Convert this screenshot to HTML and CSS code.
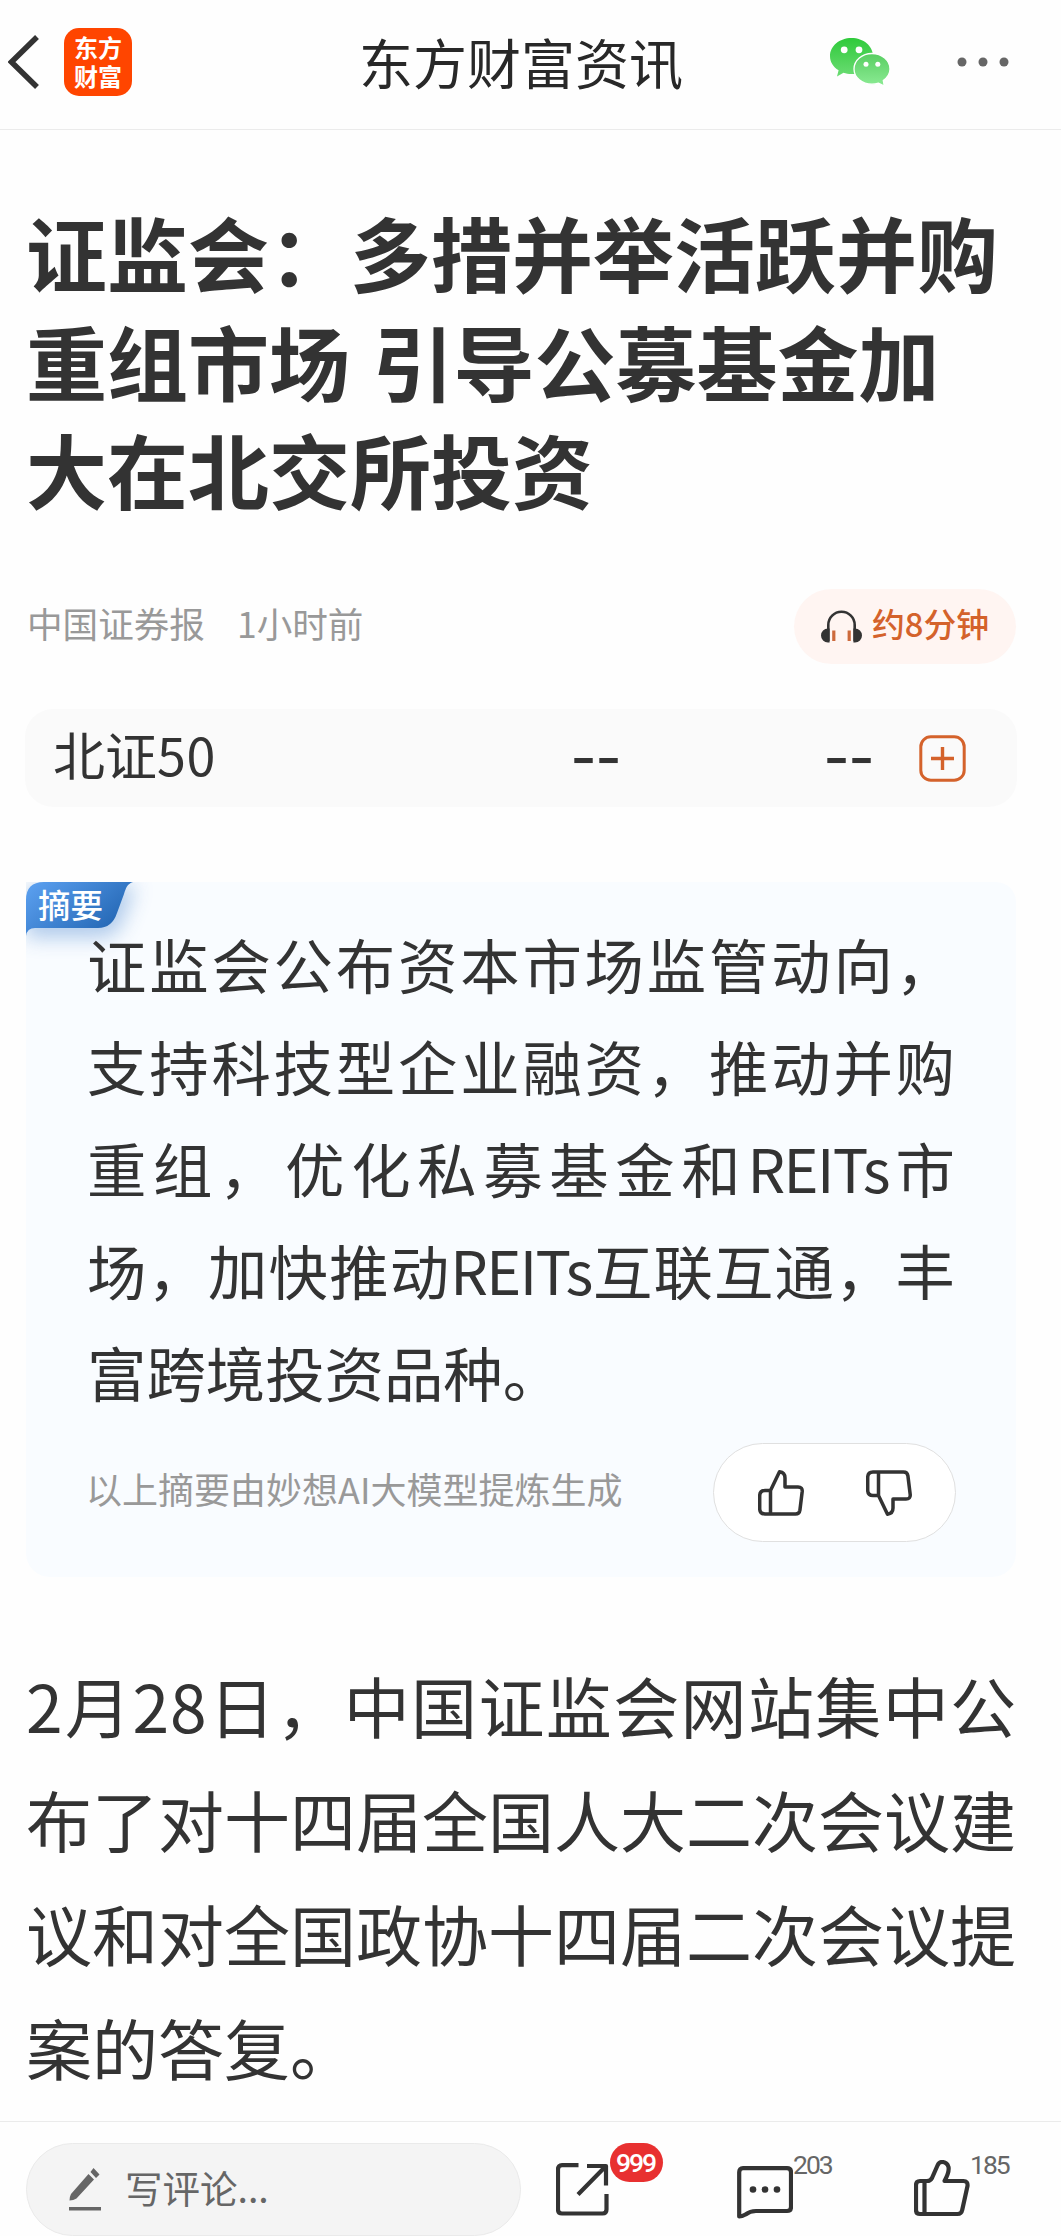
FILE: index.html
```html
<!DOCTYPE html>
<html lang="zh-CN">
<head>
    <meta charset="UTF-8">
    <meta name="viewport" content="width=device-width, initial-scale=1.0">
    <title>东方财富资讯</title>
    <link rel="stylesheet" href="styles.css">
</head>
<body>
    <!-- 顶部导航 -->
    <header class="header">
        <div class="header-left">
            <svg class="back" width="32" height="56" viewBox="0 0 32 56">
                <path d="M29 3L3.500 28L29 53" fill="none" stroke="#333" stroke-width="5.500"/>
            </svg>
            <div class="logo">东方<br>财富</div>
        </div>
        <div class="header-title">东方财富资讯</div>
        <div class="header-right">
            <svg width="60" height="49" viewBox="0 0 60 49">
                <defs>
                    <linearGradient id="green" x1="0" y1="0" x2="0" y2="1">
                        <stop offset="0" stop-color="#2fca3b"/>
                        <stop offset="1" stop-color="#6bdc73"/>
                    </linearGradient>
                    <linearGradient id="lightGreen" x1="0" y1="0" x2="0" y2="1">
                        <stop offset="0" stop-color="#58ce62"/>
                        <stop offset="1" stop-color="#8ceb94"/>
                    </linearGradient>
                </defs>
                <path d="M21.500 0C33.500 0 43 8 43 18S33.500 36 21.500 36C18.500 36 16 35.500 13.500 34.700L7 38.500L8.600 32.300C3 29 0 23.800 0 18C0 8 9.500 0 21.500 0Z" fill="url(#green)"/>
                <path d="M41.900 15.500C52 15.500 60 22.500 60 31C60 35.500 57.500 39.500 53.300 42.500L54.300 48.200L48.500 45.200C46.500 45.800 44.500 46.200 41.900 46.200C32 46.200 24 39.500 24 31S32 15.500 41.900 15.500Z" fill="url(#lightGreen)" stroke="#fff" stroke-width="1.300"/>
                <g fill="#fff">
                    <circle cx="14.200" cy="11.800" r="3.400"/><circle cx="29" cy="11.800" r="3.400"/>
                    <circle cx="36" cy="26.200" r="2.500"/><circle cx="47.800" cy="26.200" r="2.500"/>
                </g>
            </svg>
            <svg width="52" height="10" viewBox="0 0 52 10" fill="#666">
                <circle cx="5" cy="5" r="4.500"/><circle cx="26" cy="5" r="4.500"/><circle cx="47" cy="5" r="4.500"/>
            </svg>
        </div>
    </header>

    <main class="article">
        <h1>证监会：多措并举活跃并购<br>重组市场 引导公募基金加<br>大在北交所投资</h1>

        <div class="meta">
            <span class="source">中国证券报</span>
            <span class="time">1小时前</span>
            <div class="listen">
                <svg width="41" height="33" viewBox="0 0 41 33">
                    <path d="M7.300 31V15A13.200 13.200 0 0 1 33.700 15V31" fill="none" stroke="#333" stroke-width="2.600"/>
                    <path d="M8.600 18.500V32.500H7A7 7 0 0 1 7 18.500ZM32.400 18.500V32.500H34A7 7 0 0 0 34 18.500Z" fill="#333"/>
                    <path d="M12.800 20.500V31M28.200 20.500V31" stroke="#cd6a3c" stroke-width="3.200"/>
                </svg>
                <span>约8分钟</span>
            </div>
        </div>

        <!-- 相关指数 -->
        <div class="stock">
            <span class="stock-name">北证<b>50</b></span>
            <span class="dash">--</span>
            <span class="dash">--</span>
            <svg width="47" height="47" viewBox="0 0 47 47" fill="none" stroke="#d4622b">
                <rect x="1.800" y="1.800" width="43.400" height="43.400" rx="10" stroke-width="3"/>
                <path d="M12 23.500H35M23.500 12V35" stroke-width="3.400"/>
            </svg>
        </div>

        <!-- AI 摘要 -->
        <section class="summary">
            <div class="tag">
                <svg width="170" height="100" viewBox="0 0 170 100">
                    <defs>
                        <linearGradient id="blue" x1="0" y1="0" x2="1" y2="0.600">
                            <stop offset="0" stop-color="#5da2f2"/>
                            <stop offset="1" stop-color="#2366b3"/>
                        </linearGradient>
                        <filter id="shade" x="-50%" y="-50%" width="200%" height="250%">
                            <feGaussianBlur stdDeviation="10"/>
                        </filter>
                    </defs>
                    <path d="M0 4H110L96 40Q92 54 76 56H0Z" fill="#3a7ccb" opacity="0.380" filter="url(#shade)"/>
                    <path d="M0 18Q0 0 18 0H107C101 2 100 6 98 12L91 31Q86 46 72 46H9Q1 46 0 54Z" fill="url(#blue)"/>
                </svg>
                <span>摘要</span>
            </div>
            <p>
                <span class="line">证监会公布资本市场监管动向，</span>
                <span class="line">支持科技型企业融资，推动并购</span>
                <span class="line">重组，优化私募基金和<b>REITs</b>市</span>
                <span class="line">场，加快推动<b>REITs</b>互联互通，丰</span>
                <span class="line last">富跨境投资品种。</span>
            </p>
            <div class="summary-footer">
                <span>以上摘要由妙想AI大模型提炼生成</span>
                <div class="vote">
                    <svg width="46" height="46" viewBox="0 0 46 46">
                        <path d="M12.500 20.500H7Q1.700 20.500 1.700 26V38.500Q1.700 44 7 44H37.500Q41.300 44 41.900 40.200L44.200 21.500Q44.600 17 40 17H27V8Q27 2.500 21.500 1.800L12.500 20.500V44"/>
                    </svg>
                    <svg width="46" height="46" viewBox="0 0 46 46">
                        <path d="M12.500 25.500H7Q1.700 25.500 1.700 20V7.500Q1.700 2 7 2H37.500Q41.300 2 41.900 5.800L44.200 24.500Q44.600 29 40 29H27V38Q27 43.500 21.500 44.200L12.500 25.500V2"/>
                    </svg>
                </div>
            </div>
        </section>

        <div class="content">
            <span class="line"><i>2</i>月<i>28</i>日，中国证监会网站集中公</span>
            <span class="line">布了对十四届全国人大二次会议建</span>
            <span class="line">议和对全国政协十四届二次会议提</span>
            <span class="line last">案的答复。</span>
        </div>
    </main>

    <!-- 底部工具栏 -->
    <footer class="toolbar">
        <div class="comment-input">
            <svg width="33" height="43" viewBox="0 0 33 43" fill="#666">
                <path d="M19.500 6L25 11.500L7.500 30.500Q4.500 32.300 0.500 32.500Q0.600 28.500 2 26ZM24.500 0L30.500 6.500L27 10L21.500 4Z"/>
                <rect x="0" y="39" width="32" height="3.500"/>
            </svg>
            <span>写评论...</span>
        </div>
        <div class="tool share">
            <svg width="53" height="53" viewBox="0 0 53 53">
                <path d="M22.500 2.200H6Q2 2.200 2 6.200V46.500Q2 50.500 6 50.500H46.500Q50.500 50.500 50.500 46.500V31M31 3H50V22.500M49 4L22 31.500"/>
            </svg>
            <span class="badge">999</span>
        </div>
        <div class="tool reply">
            <svg width="56" height="53" viewBox="0 0 56 53">
                <path d="M6 2.200H50Q54 2.200 54 6.200V41Q54 45 50 45H19Q13 45 8.500 48.500Q5 50.500 2.200 50.500V6.200Q2.200 2.200 6 2.200Z"/>
                <g fill="#333" stroke="none"><circle cx="16" cy="23.500" r="3.300"/><circle cx="28" cy="23.500" r="3.300"/><circle cx="40" cy="23.500" r="3.300"/></g>
            </svg>
            <span class="count">203</span>
        </div>
        <div class="tool like">
            <svg width="56" height="57" viewBox="0 0 56 57">
                <path d="M10.500 21H6Q2 21 2 25V50Q2 54 6 54H43.500Q47.500 54 48.200 50L53.500 26Q54 21 49.500 21H30.500Q35.500 12 34.500 7Q33 2 28 2Q25 2 23.500 5.500L18 18Q16.500 21 13 21H10.500V54"/>
            </svg>
            <span class="count">185</span>
        </div>
    </footer>
</body>
</html>
```

FILE: styles.css
```css
* {
    box-sizing: border-box;
}

body {
    margin: 0;
    width: 1061px;
    height: 2236px;
    overflow: hidden;
    background-color: #fefefe;
    color: #333;
    font-family: "Noto Sans CJK SC", sans-serif;
}

svg {
    display: block;
    flex: none;
}

/* header */
.header {
    display: grid;
    grid-template-columns: 350px 342px 1fr;
    align-items: center;
    height: 130px;
    padding-bottom: 5px;
    border-bottom: 1px solid #ebebeb;
}

.header-left {
    display: flex;
    align-items: center;
    gap: 24px;
    padding-left: 8px;
}

.logo {
    width: 68px;
    height: 68px;
    padding-top: 4px;
    border-radius: 15px;
    background-color: #ff4500;
    color: #fff;
    font-size: 24px;
    font-weight: 700;
    line-height: 29px;
    text-align: center;
}

.header-title {
    color: #282828;
    font-size: 54px;
    line-height: 70px;
    text-align: center;
    white-space: nowrap;
}

.header-right {
    display: flex;
    align-items: center;
    gap: 67px;
    padding-left: 138px;
}

/* article */
.article {
    padding: 67px 45px 0 26px;
}

h1 {
    height: 325px;
    margin: 0;
    font-size: 81px;
    font-weight: 700;
    line-height: 108.500px;
    white-space: nowrap;
    word-spacing: 4px;
}

.meta {
    display: flex;
    align-items: center;
    height: 75px;
    margin-top: 67px;
    padding-left: 1px;
    color: #999;
    font-size: 35.600px;
    line-height: 50px;
}

.source,
.time {
    padding-bottom: 8px;
}

.time {
    margin-left: 32px;
}

.listen {
    display: flex;
    align-items: center;
    gap: 10px;
    width: 222px;
    height: 75px;
    margin-left: auto;
    padding-left: 27px;
    border-radius: 38px;
    background-color: #fff5f2;
    color: #d4622b;
    font-size: 32.800px;
    font-weight: 500;
}

.listen span {
    padding-bottom: 8px;
}

.stock {
    display: grid;
    grid-template-columns: 515px 253px 92px 1fr;
    align-items: center;
    height: 98px;
    margin: 45px -1px 0;
    padding-left: 28px;
    border-radius: 28px;
    background-color: #fafafa;
}

.stock-name {
    font-size: 52px;
    line-height: 70px;
    padding-bottom: 9px;
}

.stock-name b {
    font-weight: 400;
    letter-spacing: 0.500px;
}

.dash {
    padding-left: 3px;
    font-size: 72px;
    line-height: 80px;
    padding-bottom: 16px;
}

.stock svg {
    margin-left: 6px;
}

/* summary card */
.summary {
    position: relative;
    height: 695px;
    margin-top: 75px;
    padding: 30px 61px 0;
    border-radius: 20px 20px 24px 24px;
    background-color: #f9fcff;
}

.tag {
    position: absolute;
    top: 0;
    left: 0;
}

.tag span {
    position: absolute;
    top: 0;
    left: 12px;
    color: #fff;
    font-size: 32.500px;
    font-weight: 500;
    line-height: 48px;
    margin-top: -2px;
    white-space: nowrap;
}

.summary p {
    position: relative;
    margin: 0;
    font-size: 59.400px;
    line-height: 102px;
}

.line {
    display: block;
    text-align: justify;
    text-align-last: justify;
    white-space: nowrap;
}

.last {
    text-align-last: left;
}

.line b {
    font-weight: 400;
    letter-spacing: -1.600px;
}

.line i {
    font-style: normal;
    letter-spacing: 1px;
}

.summary-footer {
    display: flex;
    align-items: center;
    justify-content: space-between;
    margin-top: 21px;
    margin-left: -1px;
    color: #999;
    font-size: 36px;
}

.summary-footer > span {
    padding-bottom: 10px;
    white-space: nowrap;
}

.vote {
    display: flex;
    align-items: center;
    gap: 62px;
    width: 243px;
    height: 99px;
    margin-right: -1px;
    padding-left: 44px;
    border: 1px solid #e0e0e0;
    border-radius: 50px;
    background-color: #fff;
}

.vote path,
.tool path {
    fill: none;
    stroke: #333;
    stroke-width: 3.500;
    stroke-linejoin: round;
}

.content {
    margin-top: 70px;
    font-size: 66px;
    line-height: 114px;
}

/* bottom toolbar */
.toolbar {
    display: flex;
    align-items: flex-start;
    height: 115px;
    margin-top: 18px;
    padding: 21px 0 0 26px;
    border-top: 1px solid #ebebeb;
}

.comment-input {
    display: flex;
    align-items: center;
    gap: 23px;
    width: 495px;
    height: 93px;
    padding-left: 42px;
    border: 1px solid #eaeaea;
    border-radius: 47px;
    background-color: #f4f4f4;
    color: #666;
    font-size: 37.500px;
    line-height: 54px;
}

.comment-input span {
    padding-bottom: 6px;
}

.tool {
    display: flex;
    align-items: flex-start;
}

.tool path {
    stroke-width: 4.200;
}

.share {
    width: 216px;
    padding-left: 35px;
}

.share svg {
    margin-top: 20px;
}

.reply {
    width: 177px;
}

.reply svg {
    margin-top: 23px;
}

.like svg {
    margin-top: 17px;
}

.badge,
.count {
    font-family: Roboto, sans-serif;
    font-size: 26.500px;
    letter-spacing: -2px;
}

.badge {
    width: 53px;
    height: 39px;
    margin-left: 1px;
    padding-right: 2px;
    border-radius: 20px;
    background-color: #e83030;
    color: #fff;
    font-weight: 500;
    line-height: 39px;
    text-align: center;
}

.count {
    margin-top: 6px;
    color: #666;
    line-height: 32px;
}
```
